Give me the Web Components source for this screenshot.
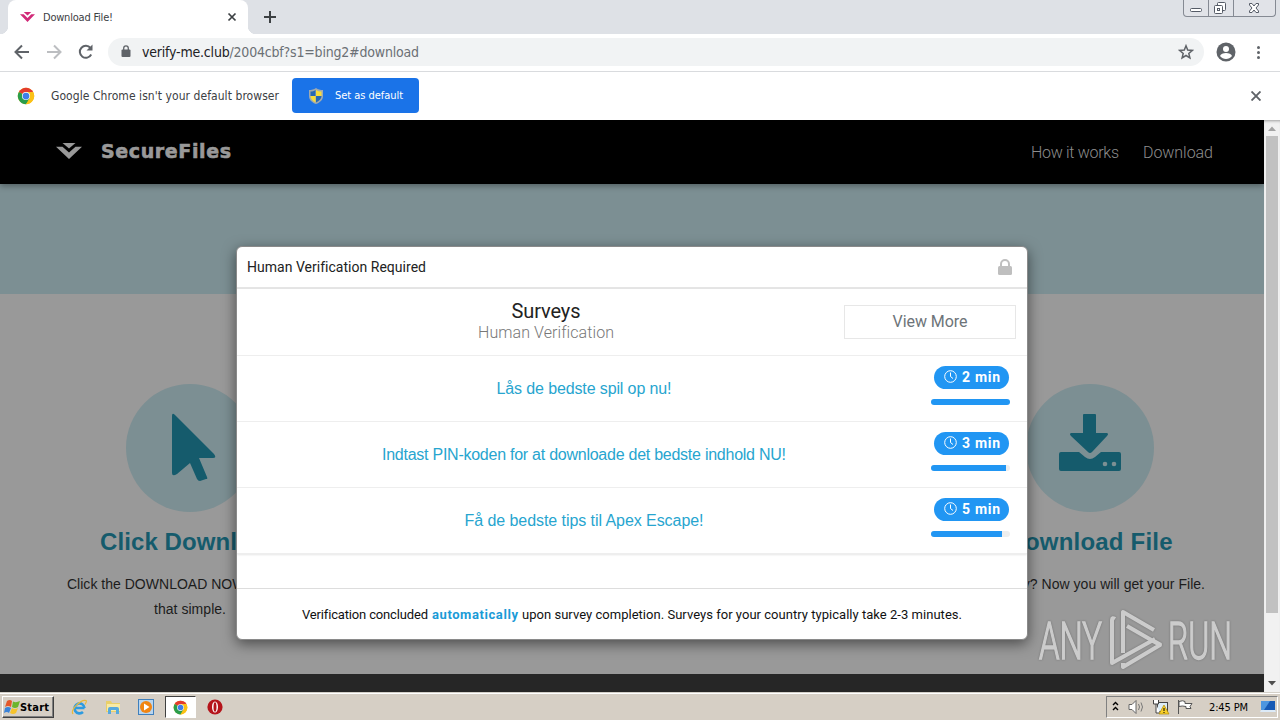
<!DOCTYPE html>
<html lang="en">
<head>
<meta charset="utf-8">
<title>Download File!</title>
<style>
    body {
        margin: 0;
        width: 1280px;
        height: 720px;
        overflow: hidden;
        display: flex;
        flex-direction: column;
        font-family: "Liberation Sans", sans-serif;
    }
</style>
</head>
<body>
<tab-strip><fit-text w="70">Download File!</fit-text></tab-strip>
<address-bar>
    <fit-text w="277"><span style="color:#202124">verify-me.club</span>/2004cbf?s1=bing2#download</fit-text>
</address-bar>
<info-bar>
    <fit-text w="228">Google Chrome isn't your default browser</fit-text>
    <fit-text slot="action" w="68">Set as default</fit-text>
</info-bar>
<page-view>
    <site-header>
        <fit-text slot="brand" w="130">SecureFiles</fit-text>
        <fit-text w="88">How it works</fit-text>
        <fit-text w="70">Download</fit-text>
    </site-header>
    <step-card slot="step" icon="cursor">
        <fit-text slot="title" w="180">Click Download</fit-text>
        <fit-text w="246">Click the DOWNLOAD NOW button, it's</fit-text>
        <fit-text w="72">that simple.</fit-text>
    </step-card>
    <step-card slot="step" icon="drive">
        <fit-text slot="title" w="165">Download File</fit-text>
        <fit-text w="230">All ready? Now you will get your File.</fit-text>
    </step-card>
    <survey-modal slot="modal">
        <fit-text slot="heading" w="179">Human Verification Required</fit-text>
        <fit-text slot="title" w="69">Surveys</fit-text>
        <fit-text slot="subtitle" w="136">Human Verification</fit-text>
        <fit-text slot="more" w="75">View More</fit-text>
        <survey-row fill="100"><fit-text w="175">Lås de bedste spil op nu!</fit-text><fit-text slot="time" w="38">2 min</fit-text></survey-row>
        <survey-row fill="95"><fit-text w="404">Indtast PIN-koden for at downloade det bedste indhold NU!</fit-text><fit-text slot="time" w="38">3 min</fit-text></survey-row>
        <survey-row fill="90"><fit-text w="239">Få de bedste tips til Apex Escape!</fit-text><fit-text slot="time" w="38">5 min</fit-text></survey-row>
        <fit-text slot="footer" w="126">Verification concluded</fit-text>
        <fit-text slot="footer" w="86" style="font-weight:bold;color:#1a9bd7">automatically</fit-text>
        <fit-text slot="footer" w="440">upon survey completion. Surveys for your country typically take 2-3 minutes.</fit-text>
    </survey-modal>
    <run-watermark slot="modal"></run-watermark>
</page-view>
<task-bar>
    <fit-text slot="start" w="29">Start</fit-text>
    <fit-text slot="clock" w="39">2:45 PM</fit-text>
</task-bar>

<script>
const TAHOMA = `"DejaVu Sans Condensed", "DejaVu Sans", sans-serif`;

const CHROME_ICON = `
    <circle cx="12" cy="12" r="11" fill="#fbc116"/>
    <path d="M12 12 2.500 6.500A11 11 0 0 1 21.500 6.500Z" fill="#e33b2e"/>
    <path d="M12 12 2.500 6.500A11 11 0 0 0 12 23l5-8Z" fill="#2a9d4b"/>
    <path d="M12 6.500h9.500A11 11 0 0 1 12 23l5-8Z" fill="#fbc116"/>
    <circle cx="12" cy="12" r="5.400" fill="#fff"/><circle cx="12" cy="12" r="4.500" fill="#3f7ee8"/>`;

const BRAND_ICON = `
    <path d="M0 4h7l7 6 7-6h7L14 17Z"/><path d="M7 0h14l-7 5.800Z"/>`;

// Registers an element whose shadow root is filled by render(element)
function define(name, render) {
    customElements.define(name, class extends HTMLElement {
        constructor() {
            super();
            this.attachShadow({ mode: 'open' });
            this.shadowRoot.innerHTML = render(this);
        }
    });
}

// Text tracked to a given width
customElements.define('fit-text', class extends HTMLElement {
    constructor() {
        super();
        this.attachShadow({ mode: 'open' });
        this.shadowRoot.innerHTML = `
            <style>
                :host { display: inline-block; white-space: nowrap; font-variant-ligatures: none; }
            </style><slot></slot>`;
    }

    fit() {
        const count = this.textContent.length;
        const gap = (this.getAttribute('w') - this.getBoundingClientRect().width) / (count - 1);
        this.style.letterSpacing = gap + 'px';
        this.style.marginRight = -gap + 'px';
    }
});

define('tab-strip', () => `
    <style>
        :host { display: flex; height: 34px; background: #dee1e6; padding-left: 8px; flex: none; align-items: stretch; font: 11px ${TAHOMA}; font-stretch: condensed; color: #3c4043; }
        .tab { width: 240px; box-sizing: border-box; background: #fff; border-radius: 8px 8px 0 0; display: flex; align-items: center; padding: 0 11px 0 12px; position: relative; }
        .tab::before, .tab::after { content: ""; position: absolute; bottom: 0; width: 8px; height: 8px; }
        .tab::before { left: -8px; background: radial-gradient(circle at 0 0, transparent 8px, #fff 8.500px); }
        .tab::after { right: -8px; background: radial-gradient(circle at 100% 0, transparent 8px, #fff 8.500px); }
        .brand { margin-right: 8px; }
        .close { margin-left: auto; }
        .new { margin: 10px 0 0 15px; }
        .window { margin: 0 4px 0 auto; display: flex; width: 93px; height: 17px; box-sizing: border-box; border: 1px solid #858a93; border-top: 0; border-radius: 0 0 4px 4px; background: #e1e3e8; }
    </style>
    <div class="tab">
        <svg class="brand" width="15" height="10" viewBox="0 0 28 17" preserveAspectRatio="none" fill="#d12a78">${BRAND_ICON}</svg>
        <slot></slot>
        <svg class="close" width="10" height="10" stroke="#3c4043" stroke-width="1.700"><path d="m1.500 1.500 7 7M8.500 1.500l-7 7"/></svg>
    </div>
    <svg class="new" width="14" height="14" stroke="#3c4043" stroke-width="2"><path d="M7 1v12M1 7h12"/></svg>
    <div class="window">
        <svg width="91" height="16" fill="#fff" stroke="#555b66">
            <path d="M24.500 0v16M49.500 0v16" stroke="#858a93"/>
            <rect x="6.500" y="8.500" width="11" height="3" rx="1"/>
            <rect x="33.500" y="2.500" width="8" height="8" rx="1"/><rect x="30.500" y="5.500" width="8" height="8" rx="1"/><rect x="33.500" y="8.500" width="2" height="2"/>
            <path d="M65.500 3.500h2.500l2 2.500 2-2.500h2.500V5L72 8l2.500 3v1.500H72L70 10l-2 2.500h-2.500V11L68 8l-2.500-3Z"/>
        </svg>
    </div>`);

define('address-bar', () => `
    <style>
        :host { display: flex; flex: none; box-sizing: border-box; height: 38px; background: #fff; border-bottom: 1px solid #d9dbde; align-items: center; padding: 0 13px 2px 14px; font: 14px ${TAHOMA}; font-stretch: condensed; color: #6b7075; }
        .nav { flex: none; margin-right: 14px; }
        .box { flex: 1; height: 28px; border-radius: 14px; background: #f1f3f4; display: flex; align-items: center; padding: 0 10px 0 13px; }
        .lock { margin-right: 11px; }
        .star { margin-left: auto; }
        .user { margin: 0 14px 0 12px; }
    </style>
    <svg class="nav" width="80" height="18" fill="none" stroke="#5f6368" stroke-width="2">
        <path d="M15 9H2.500M8 2.500 1.500 9 8 15.500"/>
        <path d="M33 9h12.500M40 2.500 46.500 9 40 15.500" stroke="#bcbec1"/>
        <path d="M77.200 11.500A6 6 0 1 1 76.500 5"/><path d="M78.500 1.500v6h-6Z" fill="#5f6368" stroke="none"/>
    </svg>
    <div class="box">
        <svg class="lock" width="10" height="13" fill="#5f6368"><rect x=".5" y="4.500" width="9" height="7.500" rx="1"/><path d="M2.700 5V3.200a2.300 2.300 0 0 1 4.600 0V5" fill="none" stroke="#5f6368" stroke-width="1.300"/></svg>
        <slot></slot>
        <svg class="star" width="16" height="16" viewBox="0 0 16 16" fill="none" stroke="#5f6368" stroke-width="1.500"><path d="m8 1.800 1.700 4.300 4.600.3-3.500 3 1.100 4.500L8 11.500l-3.900 2.400 1.100-4.500-3.500-3 4.600-.3Z"/></svg>
    </div>
    <svg class="user" width="20" height="20"><circle cx="10" cy="10" r="9.500" fill="#5f6368"/><circle cx="10" cy="7" r="3" fill="#fff"/><path d="M4 14c1-4 11-4 12 0-3 4-9 4-12 0Z" fill="#fff"/></svg>
    <svg width="17" height="16" fill="#5f6368"><circle cx="8.500" cy="3.500" r="1.500"/><circle cx="8.500" cy="8.500" r="1.500"/><circle cx="8.500" cy="13.500" r="1.500"/></svg>`);

define('info-bar', () => `
    <style>
        :host { display: flex; flex: none; height: 48px; background: #fff; align-items: center; padding: 0 19px 0 17px; font: 12px ${TAHOMA}; font-stretch: condensed; color: #3c4043; }
        .text { margin: 0 13px 0 16px; }
        .button { width: 127px; height: 35px; margin-bottom: 1px; box-sizing: border-box; border-radius: 4px; background: #1a73e8; color: #fff; display: flex; align-items: center; padding-left: 17px; gap: 12px; font-size: 11px; }
        .close { margin-left: auto; }
    </style>
    <svg width="18" height="18" viewBox="0 0 24 24">${CHROME_ICON}</svg>
    <span class="text"><slot></slot></span>
    <div class="button">
        <svg width="14" height="16"><path d="M7 0c2 1.500 4.500 2 7 2v6c0 4-3 6.500-7 8-4-1.500-7-4-7-8V2c2.500 0 5-.5 7-2Z" fill="#9faab0"/><path d="M6.500 2v6H1.500V3.500C3.500 3.500 5 3 6.500 2Z" fill="#2768b4"/><path d="M7 2c2 1 3.500 1.500 5.500 1.500V8H7Z" fill="#f7dc3b"/><path d="M1.500 8h5v6.500c-3-1.500-5-3.500-5-6.500Z" fill="#f7dc3b"/><path d="M7 8h5.500c0 3-2.500 5-5.500 6.500Z" fill="#2768b4"/></svg>
        <slot name="action"></slot>
    </div>
    <svg class="close" width="10" height="10" stroke="#5f6368" stroke-width="1.900"><path d="m.5.5 9 9M9.500.5l-9 9"/></svg>`);

define('page-view', () => `
    <style>
        :host { display: flex; flex: none; height: 572px; position: relative; }
        main { flex: 1; background: #999; display: flex; flex-direction: column; overflow: hidden; }
        .hero { height: 110px; background: #7c8f93; }
        .steps { flex: 1; display: flex; justify-content: space-between; padding: 90px 24px 0 40px; }
        .foot { height: 18px; background: #262626; }
        .bar { width: 16px; background: #f1f1f1; display: flex; flex-direction: column; align-items: center; box-shadow: inset 0 3px 3px -2px rgba(0,0,0,.35); }
        .thumb { width: 12px; height: 477px; background: #c1c1c1; }
        .bar svg { display: block; }
        .down { margin-top: auto; }
    </style>
    <main>
        <slot></slot>
        <div class="hero"></div>
        <div class="steps"><slot name="step"></slot></div>
        <div class="foot"></div>
    </main>
    <div class="bar">
        <svg width="16" height="16" fill="#a3a3a3"><path d="m4 11 4-4.500 4 4.500Z"/></svg>
        <div class="thumb"></div>
        <svg class="down" width="16" height="17" fill="#505050"><path d="m4 6 4 4.500L12 6Z"/></svg>
    </div>
    <slot name="modal"></slot>`);

define('site-header', () => `
    <style>
        :host { display: flex; flex: none; height: 64px; box-sizing: border-box; background: #000; align-items: center; padding: 0 51px 2px 56px; color: #8d8d8d; font: 300 16px Roboto, sans-serif; box-shadow: 0 2px 6px rgba(0,0,0,.35); position: relative; }
        .brand { font: bold 19px "DejaVu Sans", sans-serif; color: #999; -webkit-text-stroke: .6px #999; margin: 0 auto 0 19px; }
        nav { display: flex; gap: 24px; padding-top: 3px; }
    </style>
    <svg width="26" height="16" viewBox="0 0 28 17" fill="#999">${BRAND_ICON}</svg>
    <span class="brand"><slot name="brand"></slot></span>
    <nav><slot></slot></nav>`);

const STEP_ICONS = {
    cursor: `<path d="M46 32q0-4 3-1l39 39q3 4-1 4H73l8 19q1 2-1 2l-6 2q-2 0-3-2l-7-16-13 11q-5 3-5-1Z"/>`,
    drive: `<path d="M57 31q0-1 1-1h11q1 0 1 1v18h11q2 1 0 3L66 68q-2 2-4 0L45 52q-2-2 0-3h12Z"/>
        <path d="M35 68h18l6 5q5 4 10 0l6-5h18q2 0 2 2v15q0 2-2 2H35q-2 0-2-2V70q0-2 2-2Z"/><circle cx="79" cy="80" r="2.300" fill="#7c8f93"/><circle cx="88" cy="80" r="2.300" fill="#7c8f93"/>`
};

define('step-card', el => `
    <style>
        :host { display: flex; width: 300px; flex-direction: column; align-items: center; color: #1c1c1c; font: 14px/25px "Liberation Sans", sans-serif; }
        .disc { display: block; flex: none; border-radius: 50%; background: #7c8f93; }
        h3 { margin: 15px 0 15px; font: bold 24px/30px "Liberation Sans", sans-serif; color: #155b6c; }
    </style>
    <svg class="disc" width="128" height="128" fill="#155b6c">${STEP_ICONS[el.getAttribute('icon')]}</svg>
    <h3><slot name="title"></slot></h3>
    <slot></slot>`);

define('survey-modal', () => `
    <style>
        :host { position: absolute; left: 236px; top: 126px; width: 792px; height: 394px; box-sizing: border-box; border: 1px solid #8a8a8a; border-radius: 6px; background: #fff; box-shadow: 0 4px 14px rgba(0,0,0,.5); display: flex; flex-direction: column; font-family: Roboto, sans-serif; color: #222; overflow: hidden; }
        header { height: 40px; border-bottom: 2px solid #e5e5e5; display: flex; align-items: center; justify-content: space-between; padding: 0 15px 0 10px; font-size: 14px; }
        .top { height: 66px; border-bottom: 1px solid #eee; display: flex; align-items: center; padding: 0 11px; }
        .titles { flex: 1; display: flex; flex-direction: column; align-items: center; font-size: 20px; line-height: 22px; padding-bottom: 1px; }
        .sub { font-size: 16px; font-weight: 300; color: #777; }
        .more { width: 172px; height: 34px; box-sizing: border-box; border: 1px solid #e7e7e7; display: flex; align-items: center; justify-content: center; font-size: 16px; color: #6d7479; padding-bottom: 2px; }
        footer { margin-top: auto; height: 50px; border-top: 1px solid #ddd; display: flex; align-items: center; justify-content: center; gap: 4px; font-size: 13px; color: #111; }
        .list { box-shadow: 0 1px 2px rgba(0,0,0,.1); }
    </style>
    <header>
        <slot name="heading"></slot>
        <svg width="14" height="16" fill="#bfbfbf"><rect y="7" width="14" height="9" rx="1.500"/><path d="M3 7V5a4 4 0 0 1 8 0v2" fill="none" stroke="#bfbfbf" stroke-width="2"/></svg>
    </header>
    <div class="list">
        <div class="top">
            <div class="titles"><slot name="title"></slot><span class="sub"><slot name="subtitle"></slot></span></div>
            <div class="more"><slot name="more"></slot></div>
        </div>
        <slot></slot>
    </div>
    <footer><slot name="footer"></slot></footer>`);

define('survey-row', el => `
    <style>
        :host { display: flex; height: 65px; border-bottom: 1px solid #eee; padding: 0 17px 0 11px; color: #27a5cf; font: 16px "Liberation Sans", sans-serif; }
        .link { flex: 1; display: flex; align-items: center; justify-content: center; }
        .time { width: 79px; margin-left: 11px; padding-top: 10px; }
        .pill { margin-left: 3px; width: 75px; height: 23px; box-sizing: border-box; border-radius: 12px; background: #2196f3; color: #fff; display: flex; align-items: center; padding: 0 0 2px 10px; gap: 5px; font: bold 14px Roboto, sans-serif; }
        .track { margin-top: 10px; height: 6px; border-radius: 3px; background: #eee; overflow: hidden; }
        .fill { height: 6px; background: #2196f3; width: ${el.getAttribute('fill')}%; }
    </style>
    <div class="link"><slot></slot></div>
    <div class="time">
        <div class="pill"><svg width="13" height="13" fill="none" stroke="#fff"><circle cx="6.500" cy="6.500" r="5.800"/><path d="M6.500 2.500v4l2.500 2"/></svg><slot name="time"></slot></div>
        <div class="track"><div class="fill"></div></div>
    </div>`);

define('run-watermark', () => `
    <style>
        :host { position: absolute; left: 1026px; top: 482px; width: 220px; height: 80px; opacity: .5; }
        svg { display: block; filter: drop-shadow(0 0 1px rgba(0,0,0,.5)); }
        text { font: 300 52px Roboto, sans-serif; stroke-width: 1.500px; }
    </style>
    <svg width="220" height="80" viewBox="-10 -6 220 80" fill="#fff" stroke="#fff">
        <text x="3" y="51" textLength="63" lengthAdjust="spacingAndGlyphs">ANY</text>
        <text x="132" y="51" textLength="64" lengthAdjust="spacingAndGlyphs">RUN</text>
        <path d="M79 11q-3-2-3 1v43l43-24M118 22 87 4v41M91 18l33 19-37 22v-4M125 37l-9-5" fill="none" stroke-width="4" stroke-linejoin="round"/>
    </svg>`);

define('task-bar', () => `
    <style>
        :host { display: flex; flex: none; height: 28px; box-sizing: border-box; background: #d6cfc5; border-top: 1px solid #d4d0c8; box-shadow: inset 0 1px #fff; align-items: center; padding: 1px 2px 0 2px; font: 11px ${TAHOMA}; font-stretch: condensed; color: #000; }
        .start { width: 52px; height: 22px; box-sizing: border-box; border: 1px solid #fff; border-right-color: #404040; border-bottom-color: #404040; box-shadow: inset -1px -1px #808080; display: flex; align-items: center; padding-left: 1px; font-weight: bold; }
        .apps { display: flex; align-items: center; margin-left: 17px; }
        .apps svg { margin-right: 17px; }
        .active { width: 31px; height: 22px; box-sizing: border-box; background: #fff; border: 1px solid #404040; border-right-color: #fff; border-bottom-color: #fff; margin: 0 11px 0 -6px; display: flex; align-items: center; justify-content: center; }
        .apps .active svg { margin: 0; }
        .tray { margin-left: auto; width: 172px; height: 22px; box-sizing: border-box; border: 1px solid #808080; border-right-color: #fff; border-bottom-color: #fff; display: flex; align-items: center; padding-left: 4px; }
        .screen { margin-left: 12px; }
    </style>
    <div class="start">
        <svg width="16" height="16"><path d="M3 2q3-2 5 0L7 8Q4 6 1 8Z" fill="#e4572a"/><path d="M9 2.500q3 1.500 7-.5L14 8q-3 2-6 0Z" fill="#6cb52d"/><path d="M1 9q3-2 6 0l-2 5q-2-2-5 0Z" fill="#3b83d8"/><path d="M8 9q3 2 6 0l-2 5q-3 2-6 0Z" fill="#f6c32b"/></svg>
        <slot name="start"></slot>
    </div>
    <div class="apps">
        <svg width="17" height="17" fill="none"><path d="M13.500 9H4.500M13.500 9a5 5 0 1 0-1.500 4" stroke="#2e9be0" stroke-width="2.600"/><path d="M2 15C-1 11 10 0 15 1.500q1 1-1 4" stroke="#e9b93a" stroke-width="1.200"/></svg>
        <svg width="16" height="16"><path d="M1 2h5l1 2h8v9H1Z" fill="#e9cf6a"/><path d="M2 5h13v7H2Z" fill="#f8eaa5"/><path d="M3 15v-5q0-2 2-2h7q2 0 2 2v5h-3v-4H6v4Z" fill="#57a9dd"/></svg>
        <svg width="16" height="16"><rect x=".5" y=".5" width="15" height="15" fill="#b9d5ee" stroke="#3f80bd"/><circle cx="8" cy="8" r="6" fill="#f18512"/><path d="M6 4.500 11.500 8 6 11.500Z" fill="#fff"/></svg>
        <div class="active"><svg width="15" height="15" viewBox="0 0 24 24">${CHROME_ICON}</svg></div>
        <svg width="16" height="16"><circle cx="8" cy="8" r="7.600" fill="#b5141b"/><ellipse cx="8" cy="8" rx="3" ry="5.500" fill="#fff"/><ellipse cx="8" cy="8" rx="1.500" ry="4.800" fill="#b5141b"/></svg>
    </div>
    <div class="tray">
        <svg width="98" height="18" fill="none" stroke="#000">
            <path d="m2 7 2.500-2.500L7 7M2 12l2.500-2.500L7 12" stroke-width="1.400"/>
            <path d="M18 6.500h3l4-4v13l-4-4h-3Z" fill="#fff" stroke="#666"/><path d="M27.500 6q2 3 0 6M30 4.500q3 4.500 0 9" stroke="#777"/>
            <rect x="46.500" y="4.500" width="10" height="9" fill="#dcecf6" stroke="#444"/><path d="M42.500 2v4h5V2M45 6v9h4" stroke="#444" fill="#fff"/><path d="m53 7 5 9H48Z" fill="#f8cf2a" stroke="#b28a00" stroke-width=".7"/><path d="M53 10v3m0 1v1"/>
            <path d="M67.500 2v14" stroke="#555"/><path d="M68 3.500q4-1.500 6 0v2h7l-2 3 1 2h-5v-2q-4-1-7 0Z" fill="#fff" stroke="#555"/>
        </svg>
        <slot name="clock"></slot>
        <svg class="screen" width="16" height="16"><path d="M1 2h14v9H1Z" fill="#1659b5"/><path d="M1 2h9L4 11H1Z" fill="#4d96e0"/><path d="M1 11h14l1 2H0Z" fill="#dceaf7"/></svg>
    </div>`);

document.querySelectorAll('fit-text').forEach(el => el.fit());
</script>
</body>
</html>
